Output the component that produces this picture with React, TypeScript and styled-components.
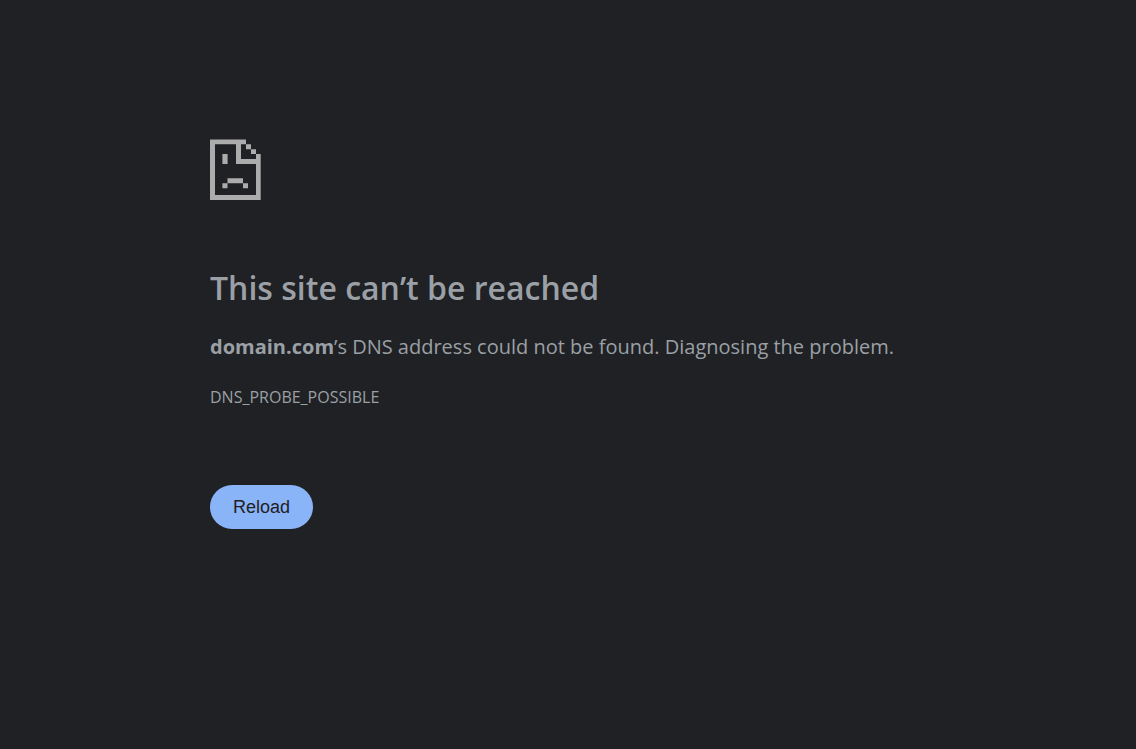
import React from 'react';
import styled, { createGlobalStyle } from 'styled-components';

const GlobalStyle = createGlobalStyle`
  body {
    margin: 0;
    background: #202124;
    color: #9aa0a6;
    font-family: 'Segoe UI', 'Open Sans', 'Noto Sans', sans-serif;
  }
`;

const Page = styled.main`
  box-sizing: border-box;
  max-width: 756px;
  margin: 0 auto;
  padding: 139px 20px 40px;
`;

const SadPage = styled.svg`
  display: block;
  width: 51px;
  height: 61px;
  fill: #acacac;
`;

const Title = styled.h1`
  margin: 64px 0 0;
  font-size: 32px;
  line-height: 48px;
  font-weight: 600;
`;

const Summary = styled.p`
  margin: 20px 0 0;
  font-size: 20px;
  line-height: 30px;
`;

const ErrorCode = styled.p`
  margin: 24px 0 0;
  font-size: 16px;
  line-height: 22px;
`;

const ReloadButton = styled.button`
  display: block;
  margin: 77px 0 0;
  padding: 0 23px;
  height: 44px;
  border: 0;
  border-radius: 22px;
  background: #8ab4f8;
  color: #202124;
  font-family: Arial, 'Liberation Sans', sans-serif;
  font-size: 18px;
  cursor: pointer;
`;

export default function App() {
  return (
    <>
      <GlobalStyle />
      <Page>
        <SadPage viewBox="0 0 51 61" aria-hidden="true">
          <path d="M0 .6H36V5.3H31V20H46V15H50.7V61H0ZM5 5.3V56H46V25H26V5.3Z" />
          <path d="M36 5.3H41V10.3H46V15H41V10.3H36Z" />
          <path d="M12.4 15H17.6V25H12.4ZM17.5 39.3H33V44.3H38V49.2H33V44.3H17.5V49.2H12.4V44.3H17.5Z" />
        </SadPage>
        <Title>This site can’t be reached</Title>
        <Summary>
          <strong>domain.com</strong>’s DNS address could not be found. Diagnosing the problem.
        </Summary>
        <ErrorCode>DNS_PROBE_POSSIBLE</ErrorCode>
        <ReloadButton type="button">Reload</ReloadButton>
      </Page>
    </>
  );
}
